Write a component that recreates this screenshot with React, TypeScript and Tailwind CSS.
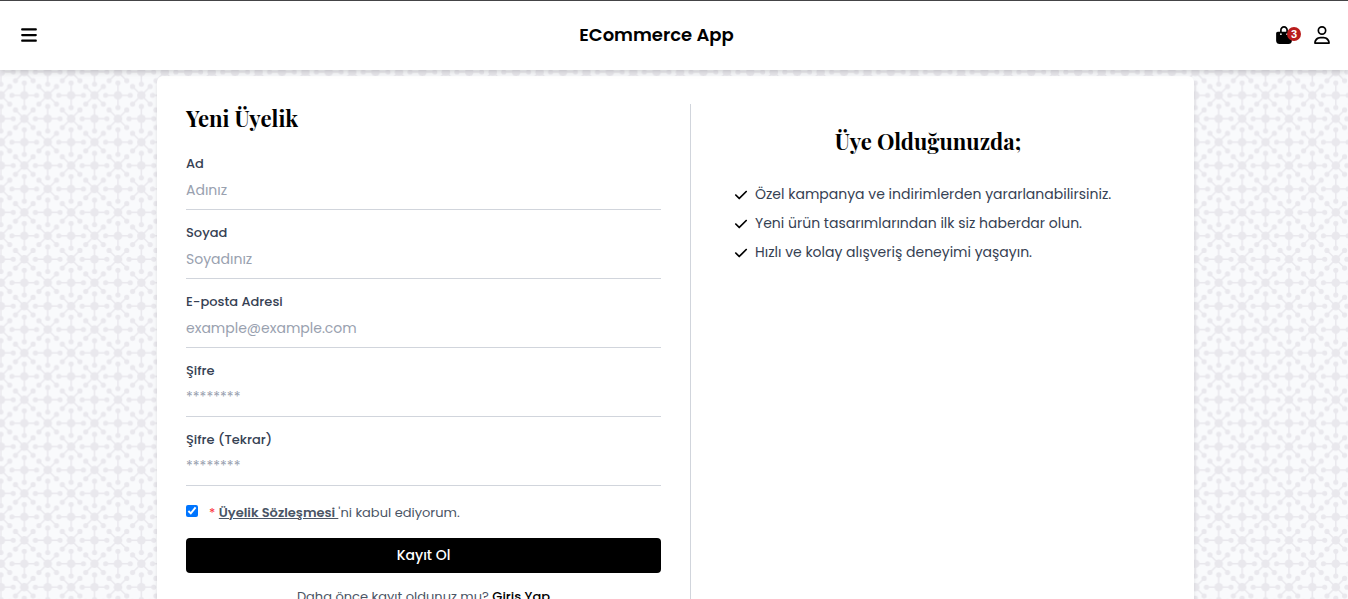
import { FaBagShopping, FaBars, FaCheck, FaRegUser } from "react-icons/fa6";

const fields = [
  { id: "name", label: "Ad", placeholder: "Adınız", type: "text" },
  { id: "surname", label: "Soyad", placeholder: "Soyadınız", type: "text" },
  { id: "email", label: "E-posta Adresi", placeholder: "example@example.com", type: "email" },
  { id: "password", label: "Şifre", placeholder: "********", type: "password" },
  { id: "password-repeat", label: "Şifre (Tekrar)", placeholder: "********", type: "password" },
];

const benefits = [
  "Özel kampanya ve indirimlerden yararlanabilirsiniz.",
  "Yeni ürün tasarımlarından ilk siz haberdar olun.",
  "Hızlı ve kolay alışveriş deneyimi yaşayın.",
];

type Point = [number, number];

const straight: Point[] = [[0, -12.3], [0, 12.3], [-12.3, 0], [12.3, 0]];
const diagonal: Point[] = [[-8.8, -8.8], [8.8, -8.8], [-8.8, 8.8], [8.8, 8.8]];

function Star({ x, y, arms }: { x: number; y: number; arms: Point[] }) {
  return (
    <g transform={`translate(${x} ${y})`}>
      <circle r="4.3" stroke="none" />
      {arms.map(([ax, ay]) => (
        <g key={`${ax},${ay}`}>
          <path d={`M0 0L${ax} ${ay}`} strokeWidth="1.5" />
          <circle cx={ax} cy={ay} r="2.6" stroke="none" />
        </g>
      ))}
    </g>
  );
}

function PatternBackground() {
  return (
    <svg className="absolute inset-0 h-full w-full" aria-hidden="true">
      <defs>
        <pattern id="stars" x="12.6" y="83.6" width="46.84" height="46.84" patternUnits="userSpaceOnUse">
          <g fill="#e9e8ed" stroke="#e9e8ed">
            <Star x={11.71} y={11.71} arms={straight} />
            <Star x={35.13} y={35.13} arms={straight} />
            <Star x={35.13} y={11.71} arms={diagonal} />
            <Star x={11.71} y={35.13} arms={diagonal} />
            <Star x={11.71} y={58.55} arms={straight} />
            <Star x={58.55} y={11.71} arms={straight} />
            <Star x={-11.71} y={35.13} arms={straight} />
            <Star x={35.13} y={-11.71} arms={straight} />
          </g>
        </pattern>
      </defs>
      <rect width="100%" height="100%" fill="url(#stars)" />
    </svg>
  );
}

export default function App() {
  return (
    <div className="relative h-screen overflow-hidden bg-[#f9fafc] font-['Poppins','Open_Sans',sans-serif] text-black">
      <PatternBackground />
      <header className="relative z-10 flex h-[70px] items-center justify-between border-t border-[#444446] bg-white pr-[17px] pb-px pl-5 shadow-md">
        <button type="button" aria-label="Menü">
          <FaBars size={18} />
        </button>
        <a href="#" className="text-lg font-semibold whitespace-nowrap">ECommerce App</a>
        <div className="flex items-center gap-3">
          <a href="#" aria-label="Sepet" className="relative pr-2">
            <FaBagShopping size={18} />
            <span className="absolute top-px right-0 flex size-[14px] items-center justify-center rounded-full bg-[#b91c1c] font-['Liberation_Sans',sans-serif] text-[11px] font-bold text-white">3</span>
          </a>
          <a href="#" aria-label="Hesabım"><FaRegUser size={18} /></a>
        </div>
      </header>

      <main className="relative pt-[6px] pl-[3px]">
        <div className="mx-auto grid max-w-[1037px] grid-cols-2 gap-[29px] rounded-md bg-white px-[29px] py-7 shadow-md">
          <section className="pb-8">
            <h1 className="mb-[22px] font-['Playfair_Display','Liberation_Serif',serif] text-[22px] leading-7 font-bold">Yeni Üyelik</h1>
            <form onSubmit={(e) => e.preventDefault()}>
              {fields.map((f) => (
                <div key={f.id} className="mb-[13px] flex h-14 flex-col">
                  <label htmlFor={f.id} className="text-[13px] leading-5 font-medium text-gray-700">{f.label}</label>
                  <input
                    id={f.id}
                    type={f.type}
                    placeholder={f.placeholder}
                    className="w-full grow border-b border-gray-300 bg-transparent pb-[3px] text-[14px] outline-none placeholder:text-gray-400"
                  />
                </div>
              ))}
              <div className="mt-[17px] mb-[15px] flex h-5 items-center text-[13px] text-gray-600">
                <input id="terms" type="checkbox" defaultChecked className="mr-[11px] mb-1 size-3" />
                <label htmlFor="terms">
                  <span className="text-red-500">*</span>{" "}
                  <a href="#" className="font-semibold underline">Üyelik Sözleşmesi </a>
                  'ni kabul ediyorum.
                </label>
              </div>
              <button type="submit" className="h-[35px] w-full rounded bg-black text-[14px] font-medium text-white">Kayıt Ol</button>
            </form>
            <p className="mt-[14px] text-center text-[13px] leading-5 text-gray-600">
              Daha önce kayıt oldunuz mu? <a href="#" className="font-medium text-black">Giriş Yap</a>
            </p>
          </section>

          <section className="border-l border-gray-300 pt-[23px]">
            <h2 className="text-center font-['Playfair_Display','Liberation_Serif',serif] text-[22px] leading-7 font-bold">Üye Olduğunuzda;</h2>
            <ul className="mt-[25px] pl-[43px] text-[14px] leading-[29px] text-gray-700">
              {benefits.map((b) => (
                <li key={b} className="flex items-center gap-[7px]">
                  <FaCheck size={14} className="shrink-0 text-black" />
                  {b}
                </li>
              ))}
            </ul>
          </section>
        </div>
      </main>
    </div>
  );
}
